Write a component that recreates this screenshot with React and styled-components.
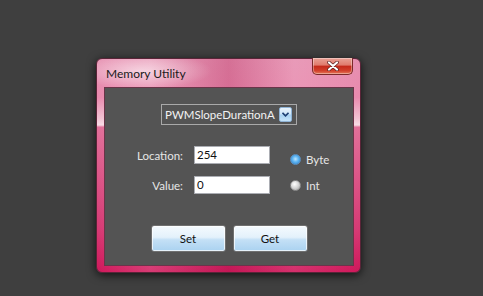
import React from 'react';
import styled, { createGlobalStyle } from 'styled-components';

const GlobalStyle = createGlobalStyle`
  html, body {
    margin: 0;
    padding: 0;
    background: #3f3f3f;
    width: 483px;
    height: 296px;
    overflow: hidden;
  }
  body {
    font-family: Lato, "Open Sans", sans-serif;
  }
`;

const Page = styled.div`
  padding: 58px 0 0 96px;
`;

/** Aero style window frame */
const Window = styled.div`
  width: 265px;
  height: 215px;
  box-sizing: border-box;
  border: 1px solid #5a2438;
  border-radius: 6px;
  padding: 0 6px 6px 7px;
  display: flex;
  flex-direction: column;
  box-shadow: 0 2px 10px rgba(0, 0, 0, 0.75);
  background:
    radial-gradient(ellipse 70px 18px at 45px 12px, rgba(255, 255, 255, 0.55), rgba(255, 255, 255, 0) 100%),
    linear-gradient(90deg, rgba(255,255,255,0) 0%, rgba(255,255,255,0.15) 20%, rgba(160,20,70,0.25) 50%, rgba(255,255,255,0.1) 75%, rgba(255,255,255,0) 100%),
    linear-gradient(180deg, #e68fb0 0%, #e98aae 18%, #f2c2d3 28%, #f8dce6 31%, #e16f99 32%, #dc5688 55%, #d63a74 80%, #d0185b 100%);
`;

const TitleBar = styled.div`
  height: 28px;
  display: flex;
  justify-content: space-between;
  align-items: flex-start;
`;

const Title = styled.span`
  align-self: center;
  margin-top: 1px;
  margin-left: 2px;
  font-size: 12px;
  color: #1a1a1a;
`;

const CloseButton = styled.div`
  width: 41px;
  height: 17px;
  margin-top: -1px;
  margin-right: 1px;
  box-sizing: border-box;
  border: 1px solid #7a2a2a;
  border-top: none;
  border-radius: 0 0 5px 5px;
  display: flex;
  align-items: center;
  justify-content: center;
  background: linear-gradient(180deg, #e9a196 0%, #e07a6c 45%, #c4281a 50%, #d2402c 80%, #e57a5c 100%);
  box-shadow: inset 0 0 0 1px rgba(255, 255, 255, 0.35);
`;

const Client = styled.div`
  flex: 1;
  box-sizing: border-box;
  background: #545454;
  border: 1px solid #6b3449;
  display: flex;
  flex-direction: column;
  align-items: center;
  padding-top: 16px;
`;

const Select = styled.div`
  width: 136px;
  height: 21px;
  box-sizing: border-box;
  border: 1px solid #a9a9a9;
  display: flex;
  align-items: center;
  justify-content: space-between;
  padding: 0 4px 0 3px;
  color: #f2f2f2;
  font-size: 11.5px;
`;

const SelectArrow = styled.div`
  width: 13px;
  height: 15px;
  box-sizing: border-box;
  border: 1px solid #8fb3d6;
  border-radius: 2px;
  display: flex;
  align-items: center;
  justify-content: center;
  background: linear-gradient(180deg, #eaf4fc 0%, #cfe6f8 45%, #a8d2f2 55%, #c6e4fa 100%);
`;

const Form = styled.div`
  display: grid;
  grid-template-columns: 78px 76px auto;
  grid-auto-rows: 18px;
  column-gap: 11px;
  row-gap: 12px;
  align-items: center;
  margin-top: 21px;
  width: 100%;
`;

const Label = styled.label`
  text-align: right;
  color: #e6e6e6;
  font-size: 11.5px;
`;

const Input = styled.div`
  height: 18px;
  box-sizing: border-box;
  border: 1px solid #abadb3;
  background: #ffffff;
  color: #111;
  font-size: 11.5px;
  line-height: 16px;
  padding-left: 2px;
`;

const Radio = styled.div`
  display: flex;
  align-items: center;
  gap: 5px;
  margin-left: 9px;
  color: #e6e6e6;
  font-size: 11.5px;
  margin-top: ${({ $checked }) => ($checked ? '8px' : '0')};
`;

const RadioDot = styled.span`
  width: 11px;
  height: 11px;
  border-radius: 50%;
  box-sizing: border-box;
  border: 1px solid ${({ $checked }) => ($checked ? '#5c8fbf' : '#8e8e8e')};
  background: ${({ $checked }) =>
    $checked
      ? 'radial-gradient(circle at 50% 45%, #bfe6ff 0%, #5cb4f2 45%, #2b7cc6 100%)'
      : 'radial-gradient(circle at 40% 35%, #ffffff 0%, #d4d4d4 50%, #9a9a9a 100%)'};
`;

const Buttons = styled.div`
  display: flex;
  gap: 7px;
  margin-top: 31px;
`;

const Button = styled.button`
  width: 75px;
  height: 27px;
  box-sizing: border-box;
  border: 1px solid #707070;
  border-radius: 3px;
  font-family: Lato, "Open Sans", sans-serif;
  font-size: 11.5px;
  color: #111;
  padding: 0;
  background: linear-gradient(180deg, #f5fafe 0%, #e3f1fb 45%, #c4e0f6 55%, #aad2f0 100%);
  box-shadow: inset 0 0 0 1px rgba(255, 255, 255, 0.7);
`;

export default function App() {
  return (
    <Page>
      <GlobalStyle />
      <Window>
        <TitleBar>
          <Title>Memory Utility</Title>
          <CloseButton>
            <svg width="12" height="10" viewBox="0 0 12 10">
              <path d="M2 1.5 L10 8.5 M10 1.5 L2 8.5" stroke="#5a1f1f" strokeWidth="3.6" strokeLinecap="round" />
              <path d="M2 1.5 L10 8.5 M10 1.5 L2 8.5" stroke="#ffffff" strokeWidth="2.2" strokeLinecap="round" />
            </svg>
          </CloseButton>
        </TitleBar>
        <Client>
          <Select>
            <span>PWMSlopeDurationA</span>
            <SelectArrow>
              <svg width="7" height="5" viewBox="0 0 7 5">
                <path d="M0.5 0.8 L3.5 3.8 L6.5 0.8" fill="none" stroke="#1d3f73" strokeWidth="1.6" />
              </svg>
            </SelectArrow>
          </Select>
          <Form>
            <Label>Location:</Label>
            <Input>254</Input>
            <Radio $checked>
              <RadioDot $checked />
              Byte
            </Radio>
            <Label>Value:</Label>
            <Input>0</Input>
            <Radio>
              <RadioDot />
              Int
            </Radio>
          </Form>
          <Buttons>
            <Button>Set</Button>
            <Button>Get</Button>
          </Buttons>
        </Client>
      </Window>
    </Page>
  );
}
